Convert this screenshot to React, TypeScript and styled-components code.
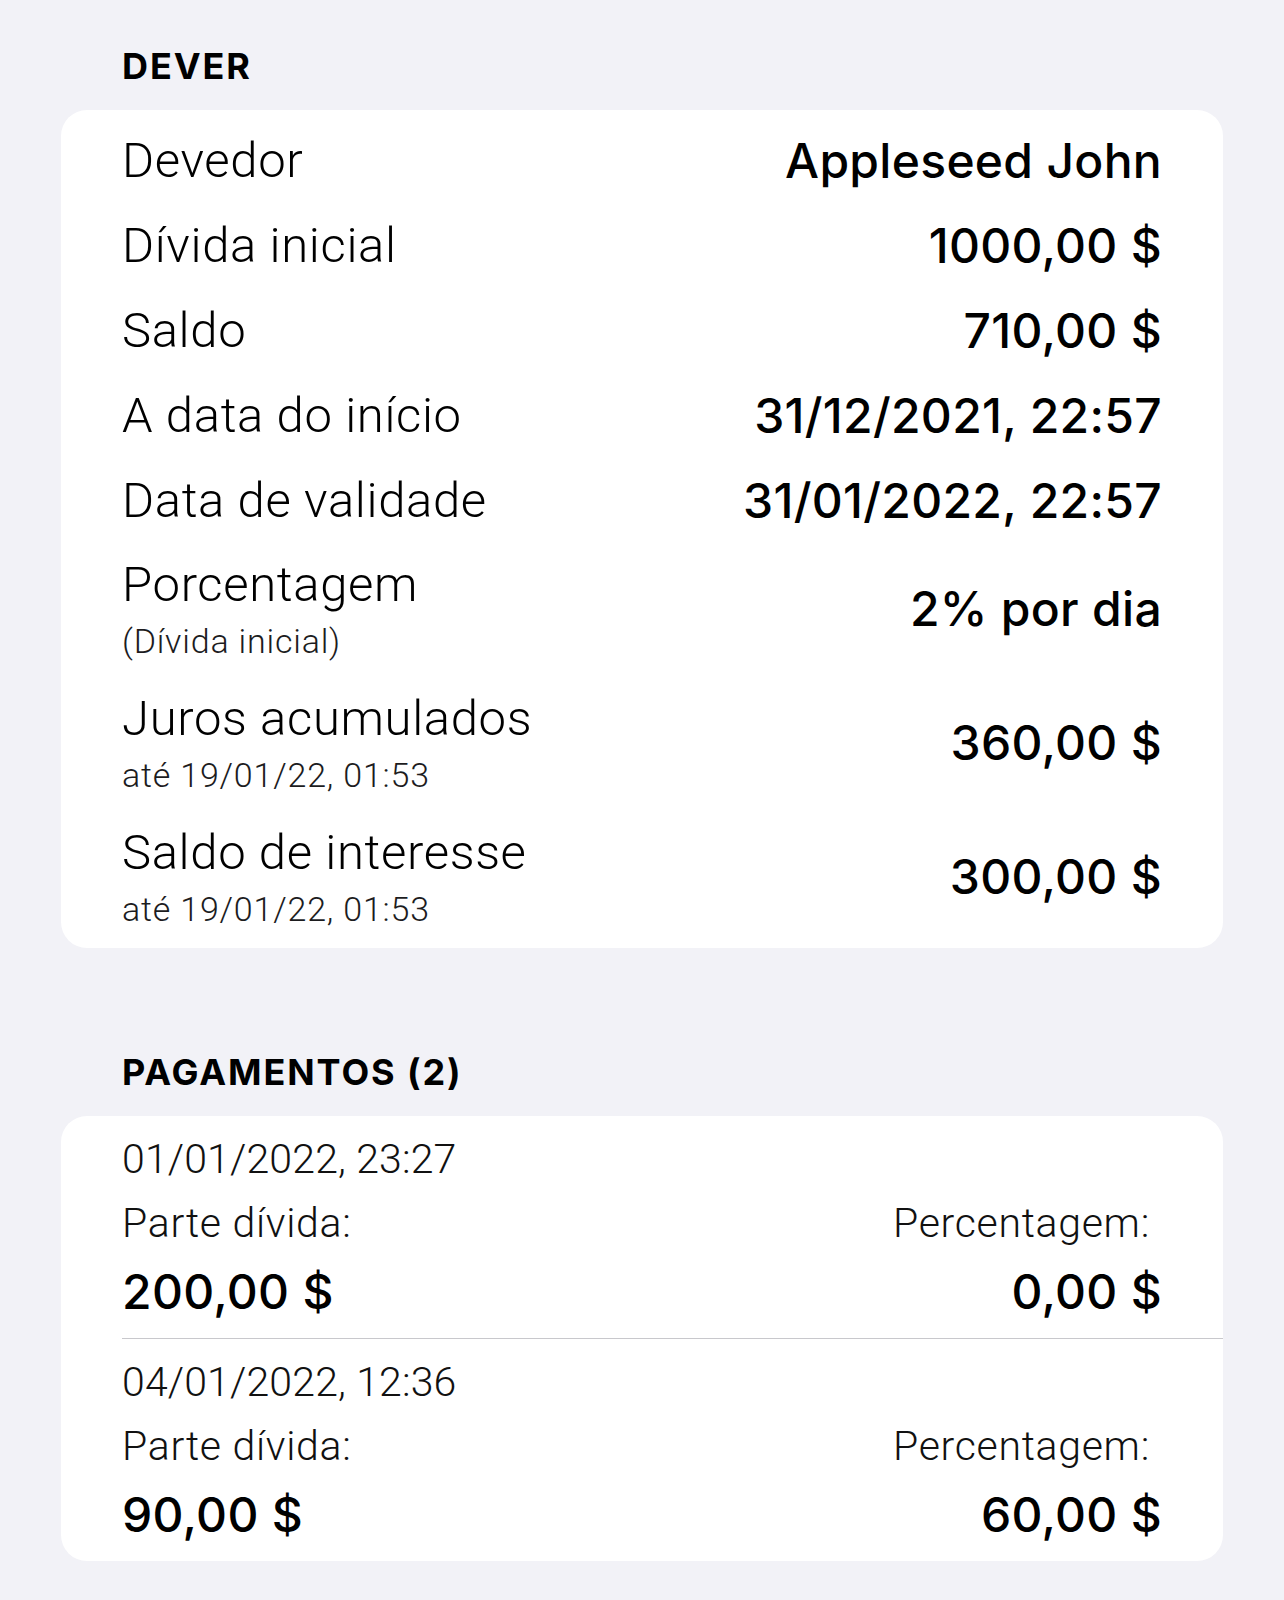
import React from "react";
import styled, { createGlobalStyle } from "styled-components";

const GlobalStyle = createGlobalStyle`
  html, body {
    margin: 0;
    padding: 0;
    background: #f2f2f7;
  }
  body {
    font-family: Inter, "Noto Sans", "Liberation Sans", sans-serif;
    color: #000;
    -webkit-font-smoothing: antialiased;
  }
`;

const lightFont = `Roboto, Inter, "Liberation Sans", sans-serif`;

const Page = styled.div`
  width: 1284px;
  min-height: 1600px;
  background: #f2f2f7;
  padding: 46px 61px 0;
  box-sizing: border-box;
`;

const Section = styled.section<{ $gap?: number }>`
  margin-bottom: ${(p) => p.$gap ?? 0}px;
`;

const SectionHeader = styled.h2`
  margin: 0 0 24px;
  padding-left: 61px;
  font-size: 36px;
  line-height: 40px;
  font-weight: 700;
  letter-spacing: 1.9px;
`;

const Card = styled.div<{ $pad?: string }>`
  background: #fff;
  border-radius: 26px;
  padding: ${(p) => p.$pad ?? "0"};
  overflow: hidden;
`;

const InfoRow = styled.div<{ $tall?: boolean }>`
  display: flex;
  align-items: center;
  justify-content: space-between;
  min-height: 85px;
  padding: ${(p) => (p.$tall ? "14px 0 16px" : "0")};
  box-sizing: border-box;
`;

const LabelBlock = styled.div`
  display: flex;
  flex-direction: column;
`;

const Label = styled.div`
  font-family: ${lightFont};
  font-size: 49px;
  line-height: 56px;
  font-weight: 300;
  letter-spacing: 0.65px;
`;

const SubLabel = styled.div`
  margin-top: 8px;
  font-family: ${lightFont};
  font-size: 34px;
  line-height: 40px;
  font-weight: 300;
  color: #1c1c1e;
  letter-spacing: 0.8px;
`;

const Value = styled.div`
  font-size: 48px;
  line-height: 56px;
  font-weight: 500;
  text-align: right;
  letter-spacing: 0.3px;
`;

const PaymentItem = styled.div<{ $last?: boolean }>`
  margin-left: 61px;
  padding: 19px 61px 19px 0;
  border-bottom: ${(p) => (p.$last ? "none" : "1px solid #c8c8cc")};
`;

const PaymentDate = styled.div`
  font-family: ${lightFont};
  font-size: 41px;
  line-height: 48px;
  font-weight: 300;
  color: #111;
  letter-spacing: 0.15px;
`;

const PaymentGrid = styled.div`
  display: grid;
  grid-template-columns: 1fr 1fr;
  margin-top: 17px;
`;

const PaymentCol = styled.div<{ $right?: boolean }>`
  display: flex;
  flex-direction: column;
  align-items: ${(p) => (p.$right ? "flex-end" : "flex-start")};
`;

const PaymentLabel = styled.div<{ $right?: boolean }>`
  font-family: ${lightFont};
  font-size: 41px;
  line-height: 46px;
  font-weight: 300;
  color: #111;
  letter-spacing: 0.7px;
  padding-right: ${(p) => (p.$right ? "12px" : "0")};
`;

const PaymentAmount = styled.div`
  margin-top: 19px;
  font-size: 48px;
  line-height: 54px;
  font-weight: 500;
  letter-spacing: 0.3px;
`;

type Info = { label: string; sub?: string; value: string };

const infos: Info[] = [
  { label: "Devedor", value: "Appleseed John" },
  { label: "Dívida inicial", value: "1000,00 $" },
  { label: "Saldo", value: "710,00 $" },
  { label: "A data do início", value: "31/12/2021, 22:57" },
  { label: "Data de validade", value: "31/01/2022, 22:57" },
  { label: "Porcentagem", sub: "(Dívida inicial)", value: "2% por dia" },
  { label: "Juros acumulados", sub: "até 19/01/22, 01:53", value: "360,00 $" },
  { label: "Saldo de interesse", sub: "até 19/01/22, 01:53", value: "300,00 $" },
];

type Payment = { date: string; part: string; percent: string };

const payments: Payment[] = [
  { date: "01/01/2022, 23:27", part: "200,00 $", percent: "0,00 $" },
  { date: "04/01/2022, 12:36", part: "90,00 $", percent: "60,00 $" },
];

export default function App() {
  return (
    <>
      <GlobalStyle />
      <Page>
        <Section $gap={104}>
          <SectionHeader>DEVER</SectionHeader>
          <Card $pad="8px 61px 3px">
            {infos.map((i) => (
              <InfoRow key={i.label} $tall={!!i.sub}>
                <LabelBlock>
                  <Label>{i.label}</Label>
                  {i.sub && <SubLabel>{i.sub}</SubLabel>}
                </LabelBlock>
                <Value>{i.value}</Value>
              </InfoRow>
            ))}
          </Card>
        </Section>
        <Section>
          <SectionHeader>PAGAMENTOS (2)</SectionHeader>
          <Card>
            {payments.map((p, idx) => (
              <PaymentItem key={p.date} $last={idx === payments.length - 1}>
                <PaymentDate>{p.date}</PaymentDate>
                <PaymentGrid>
                  <PaymentCol>
                    <PaymentLabel>Parte dívida:</PaymentLabel>
                    <PaymentAmount>{p.part}</PaymentAmount>
                  </PaymentCol>
                  <PaymentCol $right>
                    <PaymentLabel $right>Percentagem:</PaymentLabel>
                    <PaymentAmount>{p.percent}</PaymentAmount>
                  </PaymentCol>
                </PaymentGrid>
              </PaymentItem>
            ))}
          </Card>
        </Section>
      </Page>
    </>
  );
}
